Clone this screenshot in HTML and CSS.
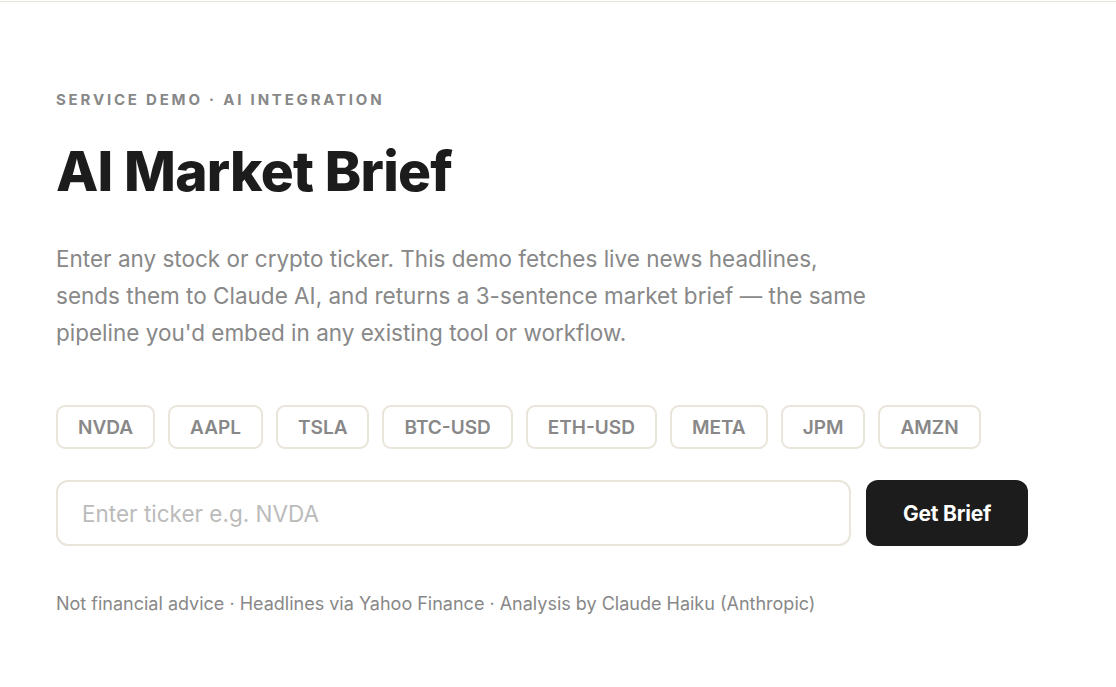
FILE: index.html
```html
<!DOCTYPE html>
<html lang="en">
<head>
<meta charset="utf-8">
<title>AI Market Brief</title>
<link rel="stylesheet" href="styles.css">
</head>
<body>
<div class="topline"></div>
<main class="page">
  <div class="eyebrow">Service Demo · AI Integration</div>
  <h1 class="title">AI Market Brief</h1>
  <p class="lead">Enter any stock or crypto ticker. This demo fetches live news headlines, sends them to Claude AI, and returns a 3-sentence market brief — the same pipeline you'd embed in any existing tool or workflow.</p>
  <div class="chips">
    <button class="chip">NVDA</button>
    <button class="chip">AAPL</button>
    <button class="chip">TSLA</button>
    <button class="chip">BTC-USD</button>
    <button class="chip">ETH-USD</button>
    <button class="chip">META</button>
    <button class="chip">JPM</button>
    <button class="chip">AMZN</button>
  </div>
  <div class="form">
    <input class="ticker" type="text" placeholder="Enter ticker e.g. NVDA">
    <button class="go">Get Brief</button>
  </div>
  <p class="note">Not financial advice · Headlines via Yahoo Finance · Analysis by Claude Haiku (Anthropic)</p>
</main>
</body>
</html>
```
FILE: styles.css
```css
* { box-sizing: border-box; }
html, body { margin: 0; padding: 0; background: #fff; }
body { font-family: Inter, "Noto Sans", sans-serif; color: #1c1c1c; }
.topline { height: 2px; border-bottom: 1px solid #e6e3db; }
.page { padding: 89px 56px 0; width: 1084px; }
.eyebrow {
  font-size: 15px; font-weight: 700; letter-spacing: 2.8px;
  text-transform: uppercase; color: #888; line-height: 18px;
}
.title {
  margin: 29px 0 0; font-size: 55px; font-weight: 800; letter-spacing: -0.7px;
  line-height: 66px; color: #1c1c1c;
}
.lead {
  margin: 36px 0 0; font-size: 22.5px; line-height: 37px; color: #888; max-width: 816px;
}
.chips { display: flex; gap: 13px; margin-top: 54px; }
.chip {
  height: 44px; padding: 0 20px; border: 2px solid #e9e5db; border-radius: 9px;
  background: #fff; font-family: inherit; font-size: 19px; font-weight: 600; color: #888;
}
.form { display: flex; gap: 15px; margin-top: 31px; }
.ticker {
  flex: 1; height: 66px; border: 2px solid #e9e5db; border-radius: 12px; padding: 0 24px;
  font-family: inherit; font-size: 22.5px; color: #1c1c1c; outline: none;
}
.ticker::placeholder { color: #bbb; }
.go {
  width: 162px; height: 66px; border: none; border-radius: 12px; background: #1c1c1c;
  color: #fff; font-family: inherit; font-size: 21px; font-weight: 700; letter-spacing: -0.01em;
}
.note { margin: 46px 0 0; font-size: 18px; line-height: 24px; color: #888; }
```
